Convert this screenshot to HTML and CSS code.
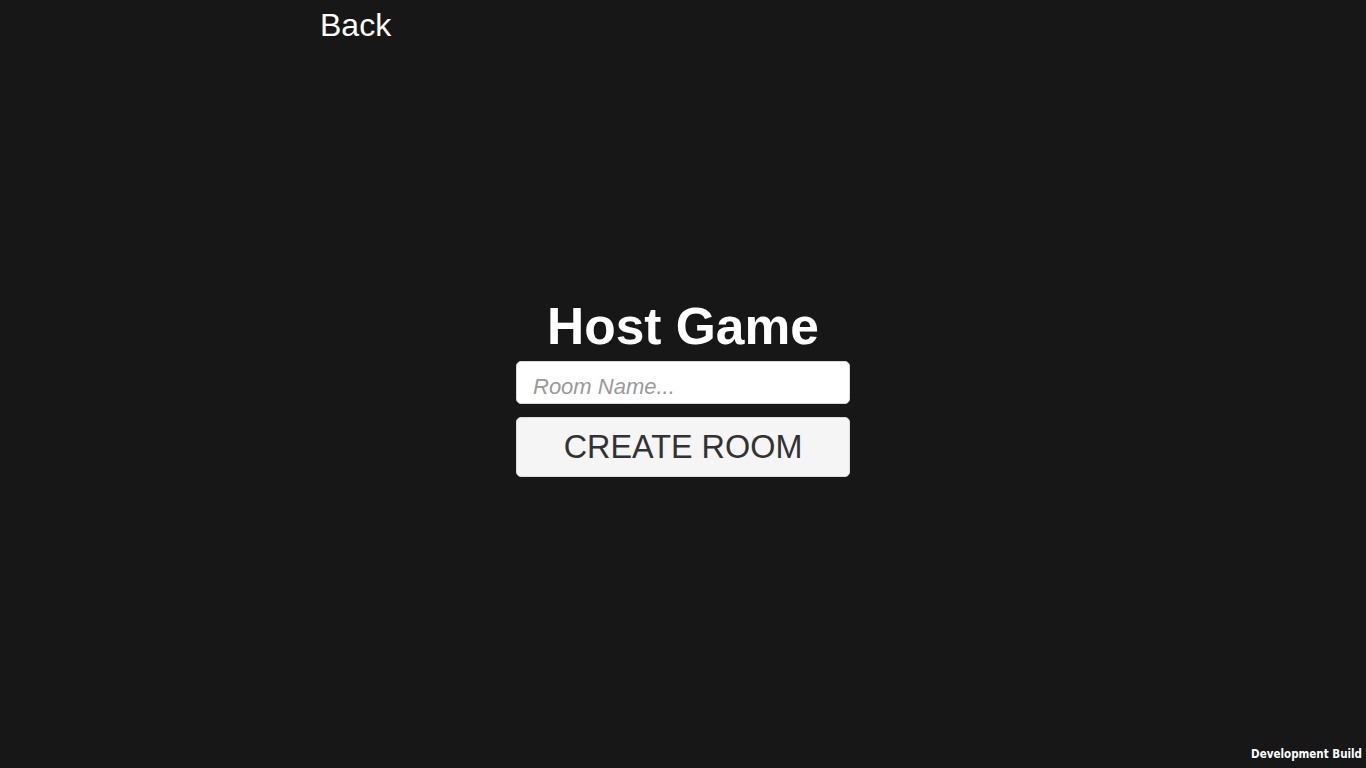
FILE: index.html
```html
<!DOCTYPE html>
<html>
<head>
<meta charset="utf-8">
<link rel="stylesheet" href="styles.css">
</head>
<body>
<div class="screen">
  <div class="topbar"><span class="back">Back</span></div>
  <div class="panel">
    <h1 class="title">Host Game</h1>
    <div class="input"><span class="placeholder">Room Name...</span></div>
    <div class="button">CREATE ROOM</div>
  </div>
  <div class="footer">Development Build</div>
</div>
</body>
</html>
```
FILE: styles.css
```css
html, body {
  margin: 0;
  padding: 0;
  background: #171717;
}
.screen {
  width: 1366px;
  height: 768px;
  display: flex;
  flex-direction: column;
  font-family: "Liberation Sans", Arial, sans-serif;
  overflow: hidden;
}
.topbar {
  padding: 9px 0 0 320px;
  height: 32px;
}
.back {
  font-size: 32px;
  line-height: 32px;
  color: #ffffff;
}
.panel {
  margin-top: 259px;
  display: flex;
  flex-direction: column;
  align-items: center;
}
.title {
  margin: 0 0 9px 0;
  font-size: 51.5px;
  line-height: 52px;
  font-weight: bold;
  color: #ffffff;
}
.input {
  box-sizing: border-box;
  width: 334px;
  height: 43px;
  padding: 15px 16px 0 16px;
  background: #ffffff;
  border-radius: 5px;
  border: 1px solid #d8d8d8;
}
.placeholder {
  display: block;
  font-size: 22px;
  line-height: 22px;
  font-style: italic;
  color: #9a9a9a;
  margin-top: -1px;
}
.button {
  box-sizing: border-box;
  margin-top: 13px;
  width: 334px;
  height: 60px;
  background: #f5f5f5;
  border-radius: 5px;
  border: 1px solid #dcdcdc;
  display: flex;
  align-items: center;
  justify-content: center;
  font-size: 32.4px;
  line-height: 32px;
  color: #323232;
}
.footer {
  margin-top: auto;
  align-self: flex-end;
  padding: 0 4px 7px 0;
  font-family: "DejaVu Sans Condensed", "DejaVu Sans", sans-serif;
  font-weight: bold;
  font-size: 11.5px;
  line-height: 14px;
  color: #ffffff;
}
```
